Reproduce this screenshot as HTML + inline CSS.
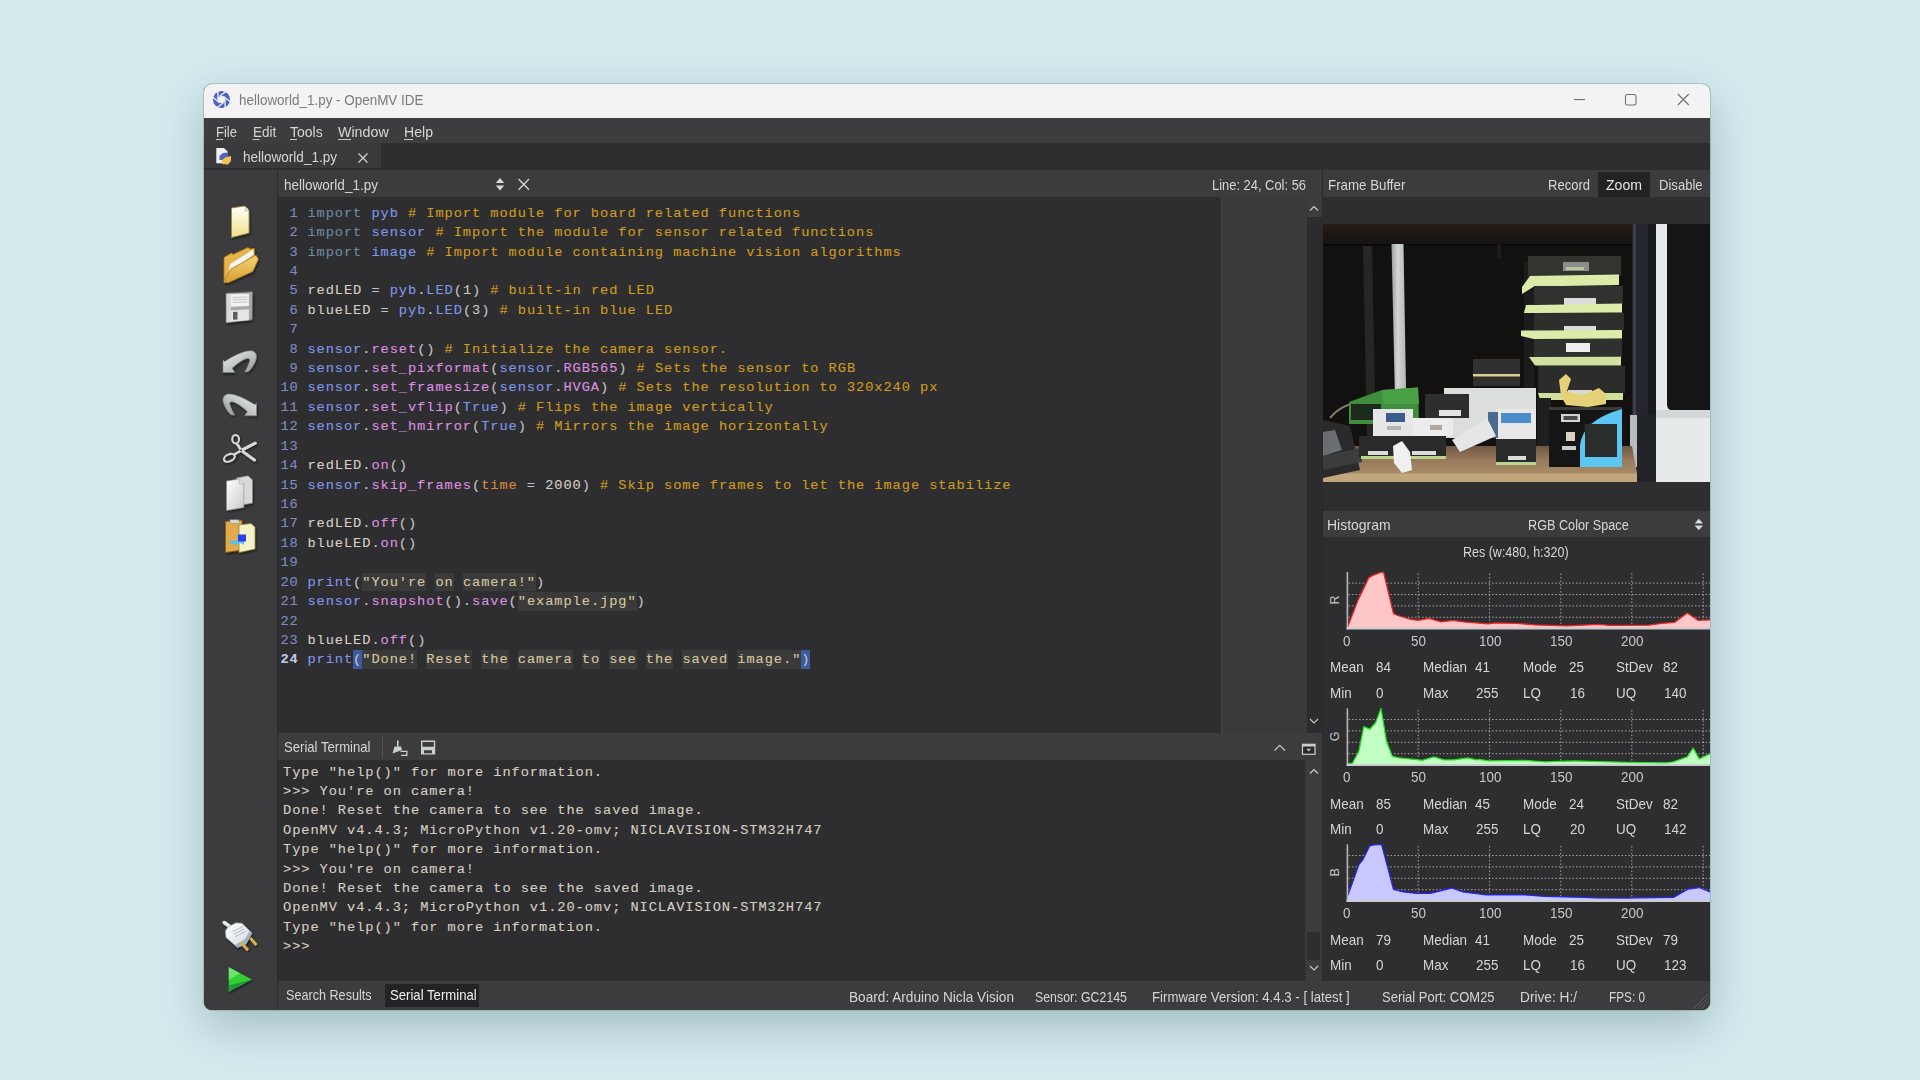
<!DOCTYPE html><html><head><meta charset="utf-8"><style>
*{margin:0;padding:0;box-sizing:border-box}
html,body{width:1920px;height:1080px;overflow:hidden}
body{background:#d4ebee;font-family:"Liberation Sans",sans-serif;position:relative}
.a{position:absolute}
.u{position:absolute;font-family:"Liberation Sans",sans-serif;white-space:pre;line-height:20px;height:20px}
.c{position:absolute;left:0;font-family:"Liberation Mono",monospace;white-space:pre;-webkit-text-stroke:0.1px currentColor}
.kw{color:#6a8ca2}.id{color:#8097ec}.cm{color:#cf9c1c}.fn{color:#dd8ee0}.tx{color:#d6cfc2}.pu{color:#c4c4c4}.or{color:#d98a3c}.st{color:#d8c8a0}
.sb{background:#3a3a3b;padding:2px 0 1.5px}
.ln{color:#7d8dc4}
.ph{background:#3d5aa0;padding:2px 0 1.5px}
</style></head><body>
<div class="a" style="left:204px;top:84px;width:1506px;height:926px;border-radius:8px;background:#3c3c3e;box-shadow:0 0 0 1px rgba(80,110,115,.26),0 16px 46px rgba(30,70,80,.28)"></div>
<div class="a" style="left:204px;top:84px;width:1506px;height:926px;border-radius:8px;overflow:hidden">
<div class="a" style="left:0px;top:0px;width:1506px;height:34px;background:#f3f3f3;"></div>
<div class="a" style="left:0px;top:34px;width:1506px;height:25px;background:#3d3d3f;"></div>
<div class="a" style="left:0px;top:59px;width:1506px;height:27px;background:#2e2e30;"></div>
<div class="a" style="left:0px;top:59px;width:177px;height:26px;background:#3a3a3c;"></div>
<div class="a" style="left:0px;top:84px;width:177px;height:1px;background:repeating-linear-gradient(90deg,#262628 0 2px,#3a3a3c 2px 3px);"></div>
<div class="a" style="left:0px;top:86px;width:73px;height:840px;background:#3c3c3e;"></div>
<div class="a" style="left:73px;top:86px;width:1px;height:840px;background:#2c2c2e;"></div>
<div class="a" style="left:74px;top:86px;width:1044px;height:27px;background:#3c3c3e;"></div>
<div class="a" style="left:74px;top:113px;width:1044px;height:536px;background:#2e2e30;"></div>
<div class="a" style="left:1017px;top:113px;width:86px;height:536px;background:#3a3a3c;"></div>
<div class="a" style="left:1017px;top:113px;width:1px;height:536px;background:#444446;"></div>
<div class="a" style="left:1103px;top:113px;width:15px;height:536px;background:#2c2c2e;"></div>
<div class="a" style="left:1103px;top:113px;width:15px;height:20px;background:#3c3c3e;"></div>
<div class="a" style="left:1118px;top:86px;width:1px;height:811px;background:#2a2a2c;"></div>
<div class="a" style="left:1119px;top:86px;width:387px;height:27px;background:#3c3c3e;"></div>
<div class="a" style="left:1119px;top:113px;width:387px;height:314px;background:#2e2e30;"></div>
<div class="a" style="left:1119px;top:426px;width:387px;height:27px;background:#3c3c3e;"></div>
<div class="a" style="left:1119px;top:426px;width:387px;height:1px;background:repeating-linear-gradient(90deg,#2a2a2c 0 2px,#3c3c3e 2px 3px);"></div>
<div class="a" style="left:1119px;top:453px;width:387px;height:444px;background:#2e2e30;"></div>
<div class="a" style="left:74px;top:649px;width:1044px;height:27px;background:#3c3c3e;"></div>
<div class="a" style="left:74px;top:676px;width:1044px;height:221px;background:#2e2e30;"></div>
<div class="a" style="left:1101px;top:676px;width:17px;height:221px;background:#3c3c3e;"></div>
<div class="a" style="left:1103px;top:848px;width:13px;height:28px;background:#2e2e30;"></div>
<div class="a" style="left:1101px;top:676px;width:1px;height:221px;background:repeating-linear-gradient(#2e2e30 0 2px,#4a4a4c 2px 3px);"></div>
<div class="a" style="left:74px;top:897px;width:1432px;height:29px;background:#3c3c3e;"></div>
<div class="a" style="left:1394px;top:88px;width:52px;height:25px;background:#232325;"></div>
<div class="a" style="left:178px;top:653px;width:1px;height:20px;background:#555557;"></div>
<div class="a" style="left:181px;top:900px;width:94px;height:23px;background:#232325;"></div>
<svg class="a" style="left:1119px;top:453px" width="387" height="444" viewBox="1323 537 387 444"><line x1="1348.5" y1="583.1" x2="1710" y2="583.1" stroke="#c4c4c4" stroke-width="1" stroke-dasharray="1.6 1.9" opacity="0.75"/><line x1="1348.5" y1="594.5" x2="1710" y2="594.5" stroke="#c4c4c4" stroke-width="1" stroke-dasharray="1.6 1.9" opacity="0.75"/><line x1="1348.5" y1="605.9" x2="1710" y2="605.9" stroke="#c4c4c4" stroke-width="1" stroke-dasharray="1.6 1.9" opacity="0.75"/><line x1="1348.5" y1="617.3" x2="1710" y2="617.3" stroke="#c4c4c4" stroke-width="1" stroke-dasharray="1.6 1.9" opacity="0.75"/><line x1="1418.2" y1="573.5" x2="1418.2" y2="628.4" stroke="#c4c4c4" stroke-width="1" stroke-dasharray="1.6 1.9" opacity="0.75"/><line x1="1489.6" y1="573.5" x2="1489.6" y2="628.4" stroke="#c4c4c4" stroke-width="1" stroke-dasharray="1.6 1.9" opacity="0.75"/><line x1="1560.8" y1="573.5" x2="1560.8" y2="628.4" stroke="#c4c4c4" stroke-width="1" stroke-dasharray="1.6 1.9" opacity="0.75"/><line x1="1631.8" y1="573.5" x2="1631.8" y2="628.4" stroke="#c4c4c4" stroke-width="1" stroke-dasharray="1.6 1.9" opacity="0.75"/><line x1="1703.2" y1="573.5" x2="1703.2" y2="628.4" stroke="#c4c4c4" stroke-width="1" stroke-dasharray="1.6 1.9" opacity="0.75"/><polygon points="1347.9,628.4 1347.9,626.4 1357.8,600.6 1368.7,577.9 1371.7,575.9 1380.6,572.4 1383.6,572.4 1393.5,613.5 1397.4,615.5 1409.3,619 1418.2,620.4 1429.1,618.4 1441,621.9 1452.9,620.4 1463.8,621.9 1488.5,623.9 1494.5,622.9 1516.2,623.4 1534.9,624.9 1566.6,625.9 1599.2,624.4 1610.1,625.4 1648.7,625.2 1661.6,623.4 1674.4,622.4 1687.3,613 1698.2,620.4 1710,619.9 1710,628.4" fill="#ffc6c8"/><polyline points="1347.9,626.4 1357.8,600.6 1368.7,577.9 1371.7,575.9 1380.6,572.4 1383.6,572.4 1393.5,613.5 1397.4,615.5 1409.3,619 1418.2,620.4 1429.1,618.4 1441,621.9 1452.9,620.4 1463.8,621.9 1488.5,623.9 1494.5,622.9 1516.2,623.4 1534.9,624.9 1566.6,625.9 1599.2,624.4 1610.1,625.4 1648.7,625.2 1661.6,623.4 1674.4,622.4 1687.3,613 1698.2,620.4 1710,619.9" fill="none" stroke="#e82424" stroke-width="1.3" stroke-linejoin="round"/><line x1="1347.4" y1="571.9" x2="1347.4" y2="629.4" stroke="#b4b8b8" stroke-width="1.6"/><line x1="1346.6" y1="628.6" x2="1710" y2="628.6" stroke="#c8cccc" stroke-width="2"/><text x="0" y="0" transform="translate(1339,600) rotate(-90)" text-anchor="middle" font-family="Liberation Sans" font-size="12.5" fill="#c4c4c4">R</text><line x1="1348.5" y1="719.5" x2="1710" y2="719.5" stroke="#c4c4c4" stroke-width="1" stroke-dasharray="1.6 1.9" opacity="0.75"/><line x1="1348.5" y1="730.9" x2="1710" y2="730.9" stroke="#c4c4c4" stroke-width="1" stroke-dasharray="1.6 1.9" opacity="0.75"/><line x1="1348.5" y1="742.3" x2="1710" y2="742.3" stroke="#c4c4c4" stroke-width="1" stroke-dasharray="1.6 1.9" opacity="0.75"/><line x1="1348.5" y1="753.6999999999999" x2="1710" y2="753.6999999999999" stroke="#c4c4c4" stroke-width="1" stroke-dasharray="1.6 1.9" opacity="0.75"/><line x1="1418.2" y1="709.9" x2="1418.2" y2="764.8" stroke="#c4c4c4" stroke-width="1" stroke-dasharray="1.6 1.9" opacity="0.75"/><line x1="1489.6" y1="709.9" x2="1489.6" y2="764.8" stroke="#c4c4c4" stroke-width="1" stroke-dasharray="1.6 1.9" opacity="0.75"/><line x1="1560.8" y1="709.9" x2="1560.8" y2="764.8" stroke="#c4c4c4" stroke-width="1" stroke-dasharray="1.6 1.9" opacity="0.75"/><line x1="1631.8" y1="709.9" x2="1631.8" y2="764.8" stroke="#c4c4c4" stroke-width="1" stroke-dasharray="1.6 1.9" opacity="0.75"/><line x1="1703.2" y1="709.9" x2="1703.2" y2="764.8" stroke="#c4c4c4" stroke-width="1" stroke-dasharray="1.6 1.9" opacity="0.75"/><polygon points="1347.9,764.8 1347.9,763.3 1352.4,763.3 1358.8,751.5 1363.8,726.7 1369.7,729.2 1375.6,722.8 1381,708.4 1386.5,741.6 1392.4,756.4 1399.4,757.9 1419.2,759.9 1422.1,760.4 1434,756.9 1443.9,759.9 1453.8,759.9 1467.7,757.9 1476.6,759.9 1479.5,759.4 1488.4,760.9 1525,760.4 1544.8,761.9 1574.5,760.9 1589.3,761.4 1629,762.3 1665.5,762.8 1673.4,761.9 1687.3,756.9 1693.2,748 1699.2,758.9 1710,753.9 1710,764.8" fill="#c2ffc2"/><polyline points="1347.9,763.3 1352.4,763.3 1358.8,751.5 1363.8,726.7 1369.7,729.2 1375.6,722.8 1381,708.4 1386.5,741.6 1392.4,756.4 1399.4,757.9 1419.2,759.9 1422.1,760.4 1434,756.9 1443.9,759.9 1453.8,759.9 1467.7,757.9 1476.6,759.9 1479.5,759.4 1488.4,760.9 1525,760.4 1544.8,761.9 1574.5,760.9 1589.3,761.4 1629,762.3 1665.5,762.8 1673.4,761.9 1687.3,756.9 1693.2,748 1699.2,758.9 1710,753.9" fill="none" stroke="#22e022" stroke-width="1.3" stroke-linejoin="round"/><line x1="1347.4" y1="708.3" x2="1347.4" y2="765.8" stroke="#b4b8b8" stroke-width="1.6"/><line x1="1346.6" y1="765.0" x2="1710" y2="765.0" stroke="#c8cccc" stroke-width="2"/><text x="0" y="0" transform="translate(1339,736.4) rotate(-90)" text-anchor="middle" font-family="Liberation Sans" font-size="12.5" fill="#c4c4c4">G</text><line x1="1348.5" y1="855.5" x2="1710" y2="855.5" stroke="#c4c4c4" stroke-width="1" stroke-dasharray="1.6 1.9" opacity="0.75"/><line x1="1348.5" y1="866.9" x2="1710" y2="866.9" stroke="#c4c4c4" stroke-width="1" stroke-dasharray="1.6 1.9" opacity="0.75"/><line x1="1348.5" y1="878.3" x2="1710" y2="878.3" stroke="#c4c4c4" stroke-width="1" stroke-dasharray="1.6 1.9" opacity="0.75"/><line x1="1348.5" y1="889.6999999999999" x2="1710" y2="889.6999999999999" stroke="#c4c4c4" stroke-width="1" stroke-dasharray="1.6 1.9" opacity="0.75"/><line x1="1418.2" y1="845.9" x2="1418.2" y2="900.8" stroke="#c4c4c4" stroke-width="1" stroke-dasharray="1.6 1.9" opacity="0.75"/><line x1="1489.6" y1="845.9" x2="1489.6" y2="900.8" stroke="#c4c4c4" stroke-width="1" stroke-dasharray="1.6 1.9" opacity="0.75"/><line x1="1560.8" y1="845.9" x2="1560.8" y2="900.8" stroke="#c4c4c4" stroke-width="1" stroke-dasharray="1.6 1.9" opacity="0.75"/><line x1="1631.8" y1="845.9" x2="1631.8" y2="900.8" stroke="#c4c4c4" stroke-width="1" stroke-dasharray="1.6 1.9" opacity="0.75"/><line x1="1703.2" y1="845.9" x2="1703.2" y2="900.8" stroke="#c4c4c4" stroke-width="1" stroke-dasharray="1.6 1.9" opacity="0.75"/><polygon points="1347.9,900.8 1347.9,895.4 1358.8,864.7 1362.8,859.8 1369.7,845.9 1373.6,844.9 1381.6,844.4 1393.5,889.4 1403.3,891.9 1417.2,893.4 1430.1,893.4 1451.8,888 1462.7,891.9 1486.5,894.9 1525,894.9 1544.8,896.4 1584.4,897.4 1594.3,897.9 1624,898.1 1673.4,897.4 1688.3,889 1699.2,887.5 1710,891.9 1710,900.8" fill="#c8c8ff"/><polyline points="1347.9,895.4 1358.8,864.7 1362.8,859.8 1369.7,845.9 1373.6,844.9 1381.6,844.4 1393.5,889.4 1403.3,891.9 1417.2,893.4 1430.1,893.4 1451.8,888 1462.7,891.9 1486.5,894.9 1525,894.9 1544.8,896.4 1584.4,897.4 1594.3,897.9 1624,898.1 1673.4,897.4 1688.3,889 1699.2,887.5 1710,891.9" fill="none" stroke="#2424ee" stroke-width="1.3" stroke-linejoin="round"/><line x1="1347.4" y1="844.3" x2="1347.4" y2="901.8" stroke="#b4b8b8" stroke-width="1.6"/><line x1="1346.6" y1="901.0" x2="1710" y2="901.0" stroke="#c8cccc" stroke-width="2"/><text x="0" y="0" transform="translate(1339,872.4) rotate(-90)" text-anchor="middle" font-family="Liberation Sans" font-size="12.5" fill="#c4c4c4">B</text></svg>

<svg class="a" style="left:1119px;top:140px" width="387" height="258" viewBox="1323 224 387 258">
<defs>
<linearGradient id="pole" x1="0" x2="1"><stop offset="0" stop-color="#9a9c9a"/><stop offset=".4" stop-color="#d4d6d4"/><stop offset="1" stop-color="#b0b2b0"/></linearGradient>
<linearGradient id="shelf" x1="0" y1="0" x2="0" y2="1"><stop offset="0" stop-color="#6e5844"/><stop offset=".5" stop-color="#98795a"/><stop offset="1" stop-color="#a88a66"/></linearGradient>
<linearGradient id="topb" x1="0" y1="0" x2="0" y2="1"><stop offset="0" stop-color="#241c17"/><stop offset="1" stop-color="#161311"/></linearGradient>
</defs>
<rect x="1323" y="224" width="387" height="258" fill="#121110"/>
<rect x="1323" y="224" width="310" height="20" fill="url(#topb)"/>
<rect x="1323" y="244" width="310" height="2" fill="#0a0a09"/>
<polygon points="1363,246 1372,246 1376,440 1367,440" fill="#262624"/>
<polygon points="1391.5,244 1403.5,244 1407,445 1396,445" fill="url(#pole)"/>
<rect x="1497" y="244" width="4" height="14" fill="#1c1c1c"/>
<!-- right side -->
<rect x="1632" y="224" width="24" height="258" fill="#24262c"/>
<rect x="1633" y="224" width="3" height="258" fill="#3a3e4a"/>
<rect x="1648" y="224" width="8" height="258" fill="#1a1b20"/>
<rect x="1656" y="224" width="54" height="258" fill="#e6eaea"/>
<path d="M1670,224 H1710 V410.5 H1673 Q1667,410.5 1667,404 V224 Z" fill="#151515"/>
<rect x="1656" y="410" width="54" height="8" fill="#d4d8d8"/>
<rect x="1630" y="415" width="7" height="52" fill="#b8bcbc"/>
<!-- shelf -->
<polygon points="1323,446 1632,446 1637,473 1323,473" fill="url(#shelf)"/>
<rect x="1323" y="473" width="316" height="9" fill="#c2a67e"/>
<rect x="1323" y="472" width="316" height="1.5" fill="#a88c66"/>
<rect x="1637" y="415" width="19" height="67" fill="#222328"/>
<!-- stack -->
<g>
<rect x="1524" y="262" width="10" height="140" fill="#1c1c1c"/>
<rect x="1528" y="256" width="93" height="20" fill="#34342f"/>
<rect x="1563" y="262" width="26" height="9" fill="#8c8c88"/>
<rect x="1566" y="267" width="18" height="3" fill="#b8c8a0"/>
<polygon points="1530,276 1619,274.5 1619,285 1534,286.5 1522,294 1522,287" fill="#dcebaa"/>
<rect x="1534" y="286" width="89" height="18" fill="#313130"/>
<rect x="1564" y="298" width="32" height="7" fill="#dcdcdc"/>
<polygon points="1526,305 1622,303.5 1622,312.5 1534,313 1524,313" fill="#dcebaa"/>
<rect x="1534" y="313" width="90" height="17" fill="#2e2e2d"/>
<rect x="1564" y="326" width="32" height="7" fill="#dcdcdc"/>
<polygon points="1521,330.5 1622,330 1622,338.5 1534,339 1521,336" fill="#dcebaa"/>
<rect x="1534" y="339" width="88" height="18" fill="#30302f"/>
<rect x="1566" y="343" width="24" height="9" fill="#eeeeee"/>
<polygon points="1529,357 1621,356.8 1621,365.5 1535,365.5" fill="#d2e0a0"/>
<rect x="1538" y="366" width="87" height="27" fill="#2c2c2b"/>
<rect x="1568" y="390" width="24" height="5" fill="#d8d8d8"/>
<polygon points="1538,393 1623,393 1623,400 1540,400" fill="#cfe09c"/>
</g>
<!-- cable -->
<path d="M1559,380 L1566,374 L1571,379 L1567,391 L1581,396 L1599,388 L1606,394 L1606,404 L1588,407 L1566,405 L1561,396 Z" fill="#e6d078"/>
<!-- black front box -->
<rect x="1537" y="398" width="14" height="48" fill="#1f1f1f"/>
<rect x="1549" y="407" width="73" height="60" fill="#151515"/>
<rect x="1549" y="407" width="73" height="3" fill="#3a3a3a"/>
<path d="M1580,467 V446 Q1582,420 1622,409 V467 Z" fill="#5cc6f2"/>
<rect x="1585" y="424" width="32" height="33" fill="#2c2e2e"/>
<rect x="1561" y="414" width="19" height="8" fill="#d4d4d4"/>
<rect x="1563.5" y="416" width="14" height="4" fill="#4a4a4a"/>
<rect x="1566" y="432" width="9" height="9" fill="#d8d0c0"/>
<rect x="1562" y="446" width="14" height="4" fill="#c8c8c8"/>
<!-- left side objects -->
<polygon points="1323,420 1350,426 1360,470 1323,478" fill="#2a2a2a"/>
<polygon points="1323,432 1335,430 1342,450 1323,456" fill="#6a6e70"/>
<polygon points="1323,456 1360,448 1362,462 1323,470" fill="#3c3c3c"/>
<path d="M1330,418 Q1345,400 1372,402" stroke="#8a7a60" stroke-width="2" fill="none"/>
<!-- green box -->
<polygon points="1349,402 1382,390 1418,387.5 1419,424 1349,424" fill="#3e8e3c"/>
<polygon points="1382,390 1418,387.5 1419,404 1383,404" fill="#4aa046"/>
<rect x="1351" y="404" width="30" height="16" fill="#1c2a1e"/>
<!-- boxes middle -->
<rect x="1444" y="388" width="92" height="50" fill="#dcdedc"/>
<rect x="1473" y="359" width="47" height="27" fill="#303030"/>
<rect x="1473" y="374" width="47" height="2.5" fill="#d8cf8a"/>
<rect x="1425" y="394" width="44" height="24" fill="#2e2e2e"/>
<rect x="1439" y="410" width="22" height="6" fill="#e4e4e4"/>
<rect x="1373" y="409" width="40" height="27" fill="#e6e6e6"/>
<rect x="1386" y="413" width="19" height="9" fill="#3a5c8e"/>
<rect x="1413" y="418" width="40" height="18" fill="#ececec"/>
<rect x="1430" y="425" width="12" height="5" fill="#b0a8a0"/>
<rect x="1387" y="426" width="14" height="4" fill="#b4b4b4"/>
<rect x="1496" y="409" width="40" height="30" fill="#e8e8e8"/>
<rect x="1501" y="413" width="30" height="10" fill="#4c8cc8"/>
<rect x="1488" y="412" width="10" height="26" fill="#4a6a90"/>
<polygon points="1452,440 1487,418 1496,436 1460,452" fill="#e6e6e6"/>
<rect x="1359" y="436" width="87" height="21" fill="#2a2a2a"/>
<rect x="1361" y="456" width="85" height="3" fill="#b6d68e"/>
<rect x="1368" y="451" width="20" height="4" fill="#dcdcdc"/>
<rect x="1412" y="451" width="24" height="4" fill="#dcdcdc"/>
<rect x="1496" y="439" width="40" height="23" fill="#2c2c2c"/>
<rect x="1496" y="462" width="40" height="3" fill="#b6d68e"/>
<rect x="1508" y="456" width="18" height="4" fill="#dcdcdc"/>
<polygon points="1393,446 1402,441 1410,452 1412,470 1402,473 1394,463" fill="#f0f0f0"/>
</svg>


<svg class="a" style="left:0;top:0" width="1506" height="926" viewBox="204 84 1506 926">
<defs>
<linearGradient id="pg" x1="0" y1="0" x2="0" y2="1"><stop offset="0" stop-color="#fffff6"/><stop offset="1" stop-color="#efe08a"/></linearGradient>
<linearGradient id="fold" x1="0" y1="0" x2="0" y2="1"><stop offset="0" stop-color="#f2d27a"/><stop offset="1" stop-color="#d99e32"/></linearGradient>
<linearGradient id="silver" x1="0" y1="0" x2="1" y2="1"><stop offset="0" stop-color="#f2f4f4"/><stop offset=".6" stop-color="#b8bcbc"/><stop offset="1" stop-color="#8e9292"/></linearGradient>
<linearGradient id="wpage" x1="0" y1="0" x2="1" y2="1"><stop offset="0" stop-color="#ffffff"/><stop offset="1" stop-color="#c8cacc"/></linearGradient>
<linearGradient id="flop" x1="0" y1="0" x2="1" y2="1"><stop offset="0" stop-color="#f4f4f4"/><stop offset="1" stop-color="#9c9ea0"/></linearGradient>
<linearGradient id="grn" x1="0" y1="0" x2="0" y2="1"><stop offset="0" stop-color="#5ee85e"/><stop offset=".6" stop-color="#2cc82c"/><stop offset="1" stop-color="#1c8a28"/></linearGradient>
<filter id="sh" x="-30%" y="-30%" width="160%" height="160%"><feDropShadow dx="1" dy="1.5" stdDeviation="0.9" flood-color="#000" flood-opacity="0.55"/></filter>
</defs>
<!-- title icon -->
<g transform="translate(221.5,99.5)">
<circle r="8.6" fill="#4d62c4"/>
<circle r="3.6" fill="#f3f3f3"/>
<g stroke="#f3f3f3" stroke-width="1.3">
<line x1="-1.8" y1="-3.2" x2="5.5" y2="-9"/><line x1="1.8" y1="-3.2" x2="9" y2="2.5"/><line x1="3.6" y1="0" x2="3.5" y2="9"/>
<line x1="1.8" y1="3.2" x2="-5.5" y2="9"/><line x1="-1.8" y1="3.2" x2="-9" y2="-2.5"/><line x1="-3.6" y1="0" x2="-3.5" y2="-9"/>
</g>
</g>
<!-- window buttons -->
<rect x="1574" y="99" width="11" height="1.1" fill="#707070"/>
<rect x="1625.5" y="94.5" width="10.5" height="10.5" rx="1.8" fill="none" stroke="#707070" stroke-width="1.1"/>
<path d="M1677.8,94 L1688.8,105 M1688.8,94 L1677.8,105" stroke="#707070" stroke-width="1.1"/>
<!-- menu underlines -->
<g fill="#c8c8c8">
<rect x="216" y="139" width="7" height="1"/><rect x="252.6" y="139" width="7" height="1"/><rect x="290" y="139" width="7" height="1"/><rect x="338" y="139" width="13" height="1"/><rect x="404" y="139" width="9" height="1"/>
</g>
<!-- tab python icon -->
<path d="M216.3,148 L224,148 L228,152 L228,163.3 L216.3,163.3 Z" fill="#f0f0f0"/>
<path d="M219.5,160 L219.5,156 L223,153 L228,152.5 L228,157 L224,160 Z" fill="#4a64c0"/>
<path d="M222,164 L222,160 L225,157.5 L231,156 L231,161 L228,164.5 Z" fill="#eec455"/>
<path d="M358.5,153.5 L367.5,162.5 M367.5,153.5 L358.5,162.5" stroke="#d4d4d4" stroke-width="1.2"/>
<!-- editor header icons -->
<polygon points="495.8,183 500,178 504.2,183" fill="#d2dcdc"/>
<polygon points="495.8,185.6 500,190.5 504.2,185.6" fill="#d2dcdc"/>
<path d="M518.5,179 L529,189.8 M529,179 L518.5,189.8" stroke="#d0d8d8" stroke-width="1.3"/>
<!-- scroll chevrons -->
<g fill="none" stroke="#c8cccc" stroke-width="1.1">
<path d="M1310,210.5 L1314,206.5 L1318,210.5"/>
<path d="M1310,719 L1314,723 L1318,719"/>
<path d="M1310,773.5 L1314,769.5 L1318,773.5"/>
<path d="M1310,966 L1314,970 L1318,966"/>
<path d="M1274.5,750.5 L1279.7,745.3 L1284.9,750.5"/>
</g>
<rect x="1302.5" y="744.3" width="12.5" height="10" fill="#2a2a2a" stroke="#c8d0d0" stroke-width="1.2"/>
<rect x="1302.5" y="744.3" width="12.5" height="2.2" fill="#c8d0d0"/>
<polygon points="1306.3,748.8 1308.7,751.5 1311.2,748.8" fill="#c0c0c0"/>
<!-- histogram header arrows -->
<polygon points="1694.6,523.4 1698.8,518.8 1703,523.4" fill="#d2dcdc"/>
<polygon points="1694.6,525.6 1698.8,530.2 1703,525.6" fill="#d2dcdc"/>
<!-- serial terminal header icons: broom + save -->
<g fill="#c8d0d0">
<rect x="397" y="740.5" width="1.6" height="6"/>
<polygon points="394.5,746.5 401,746.5 402,750 392.5,753.5"/>
<path d="M400.5,750.8 h7 v5.2 h-6.5 v-1.2 h5.3 v-2.8 h-5.8 z"/>
<path d="M421,740.5 h14.2 v14 h-14.2 z M422.4,742 v4.8 h11.4 v-4.8 z M424,750.3 v3 h8 v-3 z" fill-rule="evenodd"/>
</g>
<!-- toolbar icons -->
<g filter="url(#sh)">
<!-- new -->
<path d="M231.5,208 L245,206 L249,210.5 L249,233 L231.5,237.5 Z" fill="url(#pg)" stroke="#9c8a3c" stroke-width=".8"/>
<path d="M245,206 L245.5,211 L249,210.5" fill="#e8e8e8" stroke="#9c9c9c" stroke-width=".6"/>
<!-- open folder -->
<path d="M224,257.5 L231.5,253 L233,254.5 L248,247.5 L250,249 L254.5,248.5 L254.5,262 L227,282 L224,283 Z" fill="#e6b44a" stroke="#a8781c" stroke-width=".8"/>
<path d="M229.8,264.2 L253.1,249.5 L253.5,254.5 L228.6,272.8 Z" fill="#f4f4f6"/>
<path d="M231,269 L256,255.2 L258.4,259.3 L252.7,271.6 L227.4,283 L224.5,279.7 Z" fill="url(#fold)" stroke="#a8781c" stroke-width=".8"/>
<!-- save floppy -->
<path d="M225.9,293.3 L252.6,291.7 L252.2,319.8 L226.1,322.7 Z" fill="#a6a8aa" stroke="#6a6c6e" stroke-width=".7"/>
<path d="M226.5,294 L231,293.6 L231,322 L226.5,322.5 Z" fill="#d8dada"/>
<path d="M231,294.1 L248.9,293.7 L248.9,306 L231,306.8 Z" fill="#f2f2f2"/>
<path d="M232.5,297.5 L247.5,297 M232.5,300 L247.5,299.5 M232.5,302.5 L247.5,302" stroke="#b4bcc0" stroke-width=".8"/>
<path d="M231,310.4 L248.9,309.2 L248.9,320.2 L231,321.8 Z" fill="#e4e6e6"/>
<path d="M233,312 L237.5,311.8 L237.5,319.4 L233,319.8 Z" fill="#5c5e60"/>
<!-- undo -->
<path d="M223,360 L223,372.5 L234.8,372.5 L232.1,368.2 C236,365 242,359.5 247.4,358.5 C249.5,358.2 250.2,359.8 249.5,361.5 C248.5,365 246.5,369 244.6,371.9 L248.6,371.6 C252,368.5 255.5,363 256.5,357.8 C257,353 253.5,350.5 250.1,350.8 C244,351 236,354.5 224.6,361.5 Z" fill="url(#silver)" stroke="#7e8282" stroke-width=".6"/>
<!-- redo -->
<g transform="translate(479.5,43.2) scale(-1,1)">
<path d="M223,360 L223,372.5 L234.8,372.5 L232.1,368.2 C236,365 242,359.5 247.4,358.5 C249.5,358.2 250.2,359.8 249.5,361.5 C248.5,365 246.5,369 244.6,371.9 L248.6,371.6 C252,368.5 255.5,363 256.5,357.8 C257,353 253.5,350.5 250.1,350.8 C244,351 236,354.5 224.6,361.5 Z" fill="url(#silver)" stroke="#7e8282" stroke-width=".6"/>
</g>
<!-- scissors -->
<g fill="none" stroke="#d6dada" stroke-linecap="round">
<path d="M241.2,450.4 L255.3,443.2" stroke-width="3"/>
<path d="M241.2,450.4 L254.4,460" stroke-width="3"/>
<path d="M237.5,444.5 L241.2,450.4" stroke-width="2.6"/>
<ellipse cx="235.6" cy="439.2" rx="3.4" ry="4.2" stroke-width="2"/>
<path d="M240.5,451 L234,454.5" stroke-width="2.4"/>
<ellipse cx="229.4" cy="457.8" rx="5.8" ry="3.4" transform="rotate(-25 229.4 457.8)" stroke-width="2"/>
</g>
<circle cx="241.2" cy="450.4" r="0.9" fill="#333"/>
<!-- copy -->
<path d="M236.5,478 L248,475.8 L252.5,480 L252.5,503 L236.5,506 Z" fill="#d6d8da" stroke="#8a8c8e" stroke-width=".6"/>
<path d="M226.5,481 L239,479 L243.8,483.5 L243.8,507.5 L226.5,510.5 Z" fill="url(#wpage)" stroke="#8a8c8e" stroke-width=".6"/>
<path d="M239,479 L239.5,484 L243.8,483.5" fill="#e0e0e0" stroke="#9a9a9a" stroke-width=".5"/>
<!-- paste -->
<path d="M225.5,521.5 L242,520.5 L242,550 L225.5,552.5 Z" fill="#e2aa4e" stroke="#8e5e10" stroke-width=".8"/>
<rect x="230" y="519.8" width="9" height="3.5" fill="#d8d8d8" stroke="#888" stroke-width=".5"/>
<path d="M239,525 L251,523.5 L255,527 L255,549 L239,552.5 Z" fill="#f6f2c8" stroke="#8e7e30" stroke-width=".7"/>
<path d="M228,541 Q233,547 241,543 L244,545 L244,537 L236,537 L238.5,539.5 Q233,542 228,541 Z" fill="#5ac0f0"/>
<rect x="238" y="534.5" width="8" height="7" fill="#2a40e8"/>
<!-- plug -->
<defs><linearGradient id="plugb" x1="0" y1="0" x2="1" y2="1"><stop offset="0" stop-color="#ffffff"/><stop offset=".7" stop-color="#dfe4e8"/><stop offset="1" stop-color="#b8c2cc"/></linearGradient></defs>
<path d="M224.2,922.6 L230.5,927" stroke="#e6e8e8" stroke-width="3.6" stroke-linecap="round"/>
<path d="M228,927 L236,922.8 L242,923.2 L252,933 L246,944 L237.5,947.5 L226,937.5 L225.3,931 Z" fill="url(#plugb)" stroke="#8c949a" stroke-width=".6"/>
<path d="M252,933 L246,944 L237.5,947.5 L235.5,944.5 L244.5,939.5 L249.8,931 Z" fill="#a4b2c0"/>
<path d="M232.5,931.5 L243,926.5 M233.8,934 L244.3,929 M235.1,936.5 L245.6,931.5" stroke="#aab6c0" stroke-width=".9"/>
<path d="M241,942.5 L248,950.3 M250.3,938 L256.4,945" stroke="#d9b24c" stroke-width="2.8"/>
<!-- play -->
<polygon points="228.8,967.2 251.8,979.5 228.8,991.8" fill="#30d030"/>
<polygon points="228.8,967.2 240,973.2 228.8,980" fill="#6ee66e"/>
<polygon points="228.8,985.5 251.8,979.5 228.8,991.8" fill="#24983a"/>
</g>
<!-- string bg dotted under? resize grip -->
<g stroke="#58585a" stroke-width="1">
<path d="M1693,1009 L1709,993 M1697,1009 L1709,997 M1701,1009 L1709,1001"/>
</g>
</svg>

<div class="u" style="left:34.50px;top:5.64px;font-size:14.30px;color:#7a7a7a;transform-origin:0 0;transform:scaleX(0.9398);">helloworld_1.py - OpenMV IDE</div>
<div class="u" style="left:12.00px;top:38.04px;font-size:14.30px;color:#d6d6d6;transform-origin:0 0;transform:scaleX(0.9113);">File</div>
<div class="u" style="left:48.60px;top:38.04px;font-size:14.30px;color:#d6d6d6;transform-origin:0 0;transform:scaleX(0.9414);">Edit</div>
<div class="u" style="left:86.00px;top:38.04px;font-size:14.30px;color:#d6d6d6;transform-origin:0 0;transform:scaleX(0.9795);">Tools</div>
<div class="u" style="left:134.00px;top:38.04px;font-size:14.30px;color:#d6d6d6;transform-origin:0 0;transform:scaleX(0.9968);">Window</div>
<div class="u" style="left:200.00px;top:38.04px;font-size:14.30px;color:#d6d6d6;transform-origin:0 0;transform:scaleX(0.9860);">Help</div>
<div class="u" style="left:38.70px;top:63.04px;font-size:14.30px;color:#d6d6d6;transform-origin:0 0;transform:scaleX(0.9460);">helloworld_1.py</div>
<div class="u" style="left:79.90px;top:90.64px;font-size:14.30px;color:#d6d6d6;transform-origin:0 0;transform:scaleX(0.9460);">helloworld_1.py</div>
<div class="u" style="left:1008.00px;top:90.64px;font-size:14.30px;color:#d6d6d6;transform-origin:0 0;transform:scaleX(0.9026);">Line: 24, Col: 56</div>
<div class="u" style="left:1123.60px;top:90.64px;font-size:14.30px;color:#d6d6d6;transform-origin:0 0;transform:scaleX(0.9305);">Frame Buffer</div>
<div class="u" style="left:1343.80px;top:90.64px;font-size:14.30px;color:#d6d6d6;transform-origin:0 0;transform:scaleX(0.9111);">Record</div>
<div class="u" style="left:1402.00px;top:90.64px;font-size:14.30px;color:#e6e6e6;transform-origin:0 0;transform:scaleX(0.9848);">Zoom</div>
<div class="u" style="left:1454.60px;top:90.64px;font-size:14.30px;color:#d6d6d6;transform-origin:0 0;transform:scaleX(0.9142);">Disable</div>
<div class="u" style="left:1123.40px;top:430.64px;font-size:14.30px;color:#d6d6d6;transform-origin:0 0;transform:scaleX(0.9760);">Histogram</div>
<div class="u" style="left:1324.30px;top:430.64px;font-size:14.30px;color:#d6d6d6;transform-origin:0 0;transform:scaleX(0.8860);">RGB Color Space</div>
<div class="u" style="left:1259.20px;top:458.14px;font-size:14.30px;color:#d6d6d6;transform-origin:0 0;transform:scaleX(0.8740);">Res (w:480, h:320)</div>
<div class="u" style="left:79.50px;top:653.44px;font-size:14.30px;color:#d6d6d6;transform-origin:0 0;transform:scaleX(0.9172);">Serial Terminal</div>
<div class="u" style="left:82.00px;top:901.14px;font-size:14.30px;color:#d6d6d6;transform-origin:0 0;transform:scaleX(0.8828);">Search Results</div>
<div class="u" style="left:185.70px;top:901.14px;font-size:14.30px;color:#f0f0f0;transform-origin:0 0;transform:scaleX(0.9193);">Serial Terminal</div>
<div class="u" style="left:645.10px;top:902.64px;font-size:14.30px;color:#d6d6d6;transform-origin:0 0;transform:scaleX(0.9536);">Board: Arduino Nicla Vision</div>
<div class="u" style="left:831.00px;top:902.64px;font-size:14.30px;color:#d6d6d6;transform-origin:0 0;transform:scaleX(0.8637);">Sensor: GC2145</div>
<div class="u" style="left:948.20px;top:902.64px;font-size:14.30px;color:#d6d6d6;transform-origin:0 0;transform:scaleX(0.9252);">Firmware Version: 4.4.3 - [ latest ]</div>
<div class="u" style="left:1178.20px;top:902.64px;font-size:14.30px;color:#d6d6d6;transform-origin:0 0;transform:scaleX(0.9083);">Serial Port: COM25</div>
<div class="u" style="left:1316.20px;top:902.64px;font-size:14.30px;color:#d6d6d6;transform-origin:0 0;transform:scaleX(0.9566);">Drive: H:/</div>
<div class="u" style="left:1404.80px;top:902.64px;font-size:14.30px;color:#d6d6d6;transform-origin:0 0;transform:scaleX(0.8236);">FPS: 0</div>
<div class="u" style="left:1125.70px;top:573.24px;font-size:14.30px;color:#d6d6d6;transform-origin:0 0;transform:scaleX(0.9400);">Mean</div>
<div class="u" style="left:1219.40px;top:573.24px;font-size:14.30px;color:#d6d6d6;transform-origin:0 0;transform:scaleX(0.9400);">Median</div>
<div class="u" style="left:1318.50px;top:573.24px;font-size:14.30px;color:#d6d6d6;transform-origin:0 0;transform:scaleX(0.9400);">Mode</div>
<div class="u" style="left:1412.00px;top:573.24px;font-size:14.30px;color:#d6d6d6;transform-origin:0 0;transform:scaleX(0.9400);">StDev</div>
<div class="u" style="left:1172.00px;top:573.24px;font-size:14.30px;color:#d6d6d6;transform-origin:0 0;transform:scaleX(0.9400);">84</div>
<div class="u" style="left:1271.00px;top:573.24px;font-size:14.30px;color:#d6d6d6;transform-origin:0 0;transform:scaleX(0.9400);">41</div>
<div class="u" style="left:1365.00px;top:573.24px;font-size:14.30px;color:#d6d6d6;transform-origin:0 0;transform:scaleX(0.9400);">25</div>
<div class="u" style="left:1459.00px;top:573.24px;font-size:14.30px;color:#d6d6d6;transform-origin:0 0;transform:scaleX(0.9400);">82</div>
<div class="u" style="left:1125.70px;top:598.64px;font-size:14.30px;color:#d6d6d6;transform-origin:0 0;transform:scaleX(0.9400);">Min</div>
<div class="u" style="left:1219.40px;top:598.64px;font-size:14.30px;color:#d6d6d6;transform-origin:0 0;transform:scaleX(0.9400);">Max</div>
<div class="u" style="left:1318.50px;top:598.64px;font-size:14.30px;color:#d6d6d6;transform-origin:0 0;transform:scaleX(0.9400);">LQ</div>
<div class="u" style="left:1412.00px;top:598.64px;font-size:14.30px;color:#d6d6d6;transform-origin:0 0;transform:scaleX(0.9400);">UQ</div>
<div class="u" style="left:1172.00px;top:598.64px;font-size:14.30px;color:#d6d6d6;transform-origin:0 0;transform:scaleX(0.9400);">0</div>
<div class="u" style="left:1271.50px;top:598.64px;font-size:14.30px;color:#d6d6d6;transform-origin:0 0;transform:scaleX(0.9400);">255</div>
<div class="u" style="left:1366.00px;top:598.64px;font-size:14.30px;color:#d6d6d6;transform-origin:0 0;transform:scaleX(0.9400);">16</div>
<div class="u" style="left:1459.50px;top:598.64px;font-size:14.30px;color:#d6d6d6;transform-origin:0 0;transform:scaleX(0.9400);">140</div>
<div class="u" style="left:1125.70px;top:709.64px;font-size:14.30px;color:#d6d6d6;transform-origin:0 0;transform:scaleX(0.9400);">Mean</div>
<div class="u" style="left:1219.40px;top:709.64px;font-size:14.30px;color:#d6d6d6;transform-origin:0 0;transform:scaleX(0.9400);">Median</div>
<div class="u" style="left:1318.50px;top:709.64px;font-size:14.30px;color:#d6d6d6;transform-origin:0 0;transform:scaleX(0.9400);">Mode</div>
<div class="u" style="left:1412.00px;top:709.64px;font-size:14.30px;color:#d6d6d6;transform-origin:0 0;transform:scaleX(0.9400);">StDev</div>
<div class="u" style="left:1172.00px;top:709.64px;font-size:14.30px;color:#d6d6d6;transform-origin:0 0;transform:scaleX(0.9400);">85</div>
<div class="u" style="left:1271.00px;top:709.64px;font-size:14.30px;color:#d6d6d6;transform-origin:0 0;transform:scaleX(0.9400);">45</div>
<div class="u" style="left:1365.00px;top:709.64px;font-size:14.30px;color:#d6d6d6;transform-origin:0 0;transform:scaleX(0.9400);">24</div>
<div class="u" style="left:1459.00px;top:709.64px;font-size:14.30px;color:#d6d6d6;transform-origin:0 0;transform:scaleX(0.9400);">82</div>
<div class="u" style="left:1125.70px;top:734.94px;font-size:14.30px;color:#d6d6d6;transform-origin:0 0;transform:scaleX(0.9400);">Min</div>
<div class="u" style="left:1219.40px;top:734.94px;font-size:14.30px;color:#d6d6d6;transform-origin:0 0;transform:scaleX(0.9400);">Max</div>
<div class="u" style="left:1318.50px;top:734.94px;font-size:14.30px;color:#d6d6d6;transform-origin:0 0;transform:scaleX(0.9400);">LQ</div>
<div class="u" style="left:1412.00px;top:734.94px;font-size:14.30px;color:#d6d6d6;transform-origin:0 0;transform:scaleX(0.9400);">UQ</div>
<div class="u" style="left:1172.00px;top:734.94px;font-size:14.30px;color:#d6d6d6;transform-origin:0 0;transform:scaleX(0.9400);">0</div>
<div class="u" style="left:1271.50px;top:734.94px;font-size:14.30px;color:#d6d6d6;transform-origin:0 0;transform:scaleX(0.9400);">255</div>
<div class="u" style="left:1366.00px;top:734.94px;font-size:14.30px;color:#d6d6d6;transform-origin:0 0;transform:scaleX(0.9400);">20</div>
<div class="u" style="left:1459.50px;top:734.94px;font-size:14.30px;color:#d6d6d6;transform-origin:0 0;transform:scaleX(0.9400);">142</div>
<div class="u" style="left:1125.70px;top:845.64px;font-size:14.30px;color:#d6d6d6;transform-origin:0 0;transform:scaleX(0.9400);">Mean</div>
<div class="u" style="left:1219.40px;top:845.64px;font-size:14.30px;color:#d6d6d6;transform-origin:0 0;transform:scaleX(0.9400);">Median</div>
<div class="u" style="left:1318.50px;top:845.64px;font-size:14.30px;color:#d6d6d6;transform-origin:0 0;transform:scaleX(0.9400);">Mode</div>
<div class="u" style="left:1412.00px;top:845.64px;font-size:14.30px;color:#d6d6d6;transform-origin:0 0;transform:scaleX(0.9400);">StDev</div>
<div class="u" style="left:1172.00px;top:845.64px;font-size:14.30px;color:#d6d6d6;transform-origin:0 0;transform:scaleX(0.9400);">79</div>
<div class="u" style="left:1271.00px;top:845.64px;font-size:14.30px;color:#d6d6d6;transform-origin:0 0;transform:scaleX(0.9400);">41</div>
<div class="u" style="left:1365.00px;top:845.64px;font-size:14.30px;color:#d6d6d6;transform-origin:0 0;transform:scaleX(0.9400);">25</div>
<div class="u" style="left:1459.00px;top:845.64px;font-size:14.30px;color:#d6d6d6;transform-origin:0 0;transform:scaleX(0.9400);">79</div>
<div class="u" style="left:1125.70px;top:870.94px;font-size:14.30px;color:#d6d6d6;transform-origin:0 0;transform:scaleX(0.9400);">Min</div>
<div class="u" style="left:1219.40px;top:870.94px;font-size:14.30px;color:#d6d6d6;transform-origin:0 0;transform:scaleX(0.9400);">Max</div>
<div class="u" style="left:1318.50px;top:870.94px;font-size:14.30px;color:#d6d6d6;transform-origin:0 0;transform:scaleX(0.9400);">LQ</div>
<div class="u" style="left:1412.00px;top:870.94px;font-size:14.30px;color:#d6d6d6;transform-origin:0 0;transform:scaleX(0.9400);">UQ</div>
<div class="u" style="left:1172.00px;top:870.94px;font-size:14.30px;color:#d6d6d6;transform-origin:0 0;transform:scaleX(0.9400);">0</div>
<div class="u" style="left:1271.50px;top:870.94px;font-size:14.30px;color:#d6d6d6;transform-origin:0 0;transform:scaleX(0.9400);">255</div>
<div class="u" style="left:1366.00px;top:870.94px;font-size:14.30px;color:#d6d6d6;transform-origin:0 0;transform:scaleX(0.9400);">16</div>
<div class="u" style="left:1459.50px;top:870.94px;font-size:14.30px;color:#d6d6d6;transform-origin:0 0;transform:scaleX(0.9400);">123</div>
<div class="u" style="left:1139.26px;top:547.24px;font-size:14.30px;color:#c8c8c8;transform-origin:0 0;transform:scaleX(0.9400);">0</div>
<div class="u" style="left:1206.52px;top:547.24px;font-size:14.30px;color:#c8c8c8;transform-origin:0 0;transform:scaleX(0.9400);">50</div>
<div class="u" style="left:1274.79px;top:547.24px;font-size:14.30px;color:#c8c8c8;transform-origin:0 0;transform:scaleX(0.9400);">100</div>
<div class="u" style="left:1345.79px;top:547.24px;font-size:14.30px;color:#c8c8c8;transform-origin:0 0;transform:scaleX(0.9400);">150</div>
<div class="u" style="left:1416.79px;top:547.24px;font-size:14.30px;color:#c8c8c8;transform-origin:0 0;transform:scaleX(0.9400);">200</div>
<div class="u" style="left:1139.26px;top:683.14px;font-size:14.30px;color:#c8c8c8;transform-origin:0 0;transform:scaleX(0.9400);">0</div>
<div class="u" style="left:1206.52px;top:683.14px;font-size:14.30px;color:#c8c8c8;transform-origin:0 0;transform:scaleX(0.9400);">50</div>
<div class="u" style="left:1274.79px;top:683.14px;font-size:14.30px;color:#c8c8c8;transform-origin:0 0;transform:scaleX(0.9400);">100</div>
<div class="u" style="left:1345.79px;top:683.14px;font-size:14.30px;color:#c8c8c8;transform-origin:0 0;transform:scaleX(0.9400);">150</div>
<div class="u" style="left:1416.79px;top:683.14px;font-size:14.30px;color:#c8c8c8;transform-origin:0 0;transform:scaleX(0.9400);">200</div>
<div class="u" style="left:1139.26px;top:819.14px;font-size:14.30px;color:#c8c8c8;transform-origin:0 0;transform:scaleX(0.9400);">0</div>
<div class="u" style="left:1206.52px;top:819.14px;font-size:14.30px;color:#c8c8c8;transform-origin:0 0;transform:scaleX(0.9400);">50</div>
<div class="u" style="left:1274.79px;top:819.14px;font-size:14.30px;color:#c8c8c8;transform-origin:0 0;transform:scaleX(0.9400);">100</div>
<div class="u" style="left:1345.79px;top:819.14px;font-size:14.30px;color:#c8c8c8;transform-origin:0 0;transform:scaleX(0.9400);">150</div>
<div class="u" style="left:1416.79px;top:819.14px;font-size:14.30px;color:#c8c8c8;transform-origin:0 0;transform:scaleX(0.9400);">200</div>
<div class="c ln" style="left:85.55px;top:119.70px;font-size:13.7px;letter-spacing:0.929px;line-height:19.42px;">1</div>
<div class="c" style="left:103.40px;top:119.70px;font-size:13.7px;letter-spacing:0.929px;line-height:19.42px"><span class="kw">import</span><span class="tx"> </span><span class="id">pyb</span><span class="tx"> </span><span class="cm"># Import module for board related functions</span></div>
<div class="c ln" style="left:85.55px;top:139.12px;font-size:13.7px;letter-spacing:0.929px;line-height:19.42px;">2</div>
<div class="c" style="left:103.40px;top:139.12px;font-size:13.7px;letter-spacing:0.929px;line-height:19.42px"><span class="kw">import</span><span class="tx"> </span><span class="id">sensor</span><span class="tx"> </span><span class="cm"># Import the module for sensor related functions</span></div>
<div class="c ln" style="left:85.55px;top:158.54px;font-size:13.7px;letter-spacing:0.929px;line-height:19.42px;">3</div>
<div class="c" style="left:103.40px;top:158.54px;font-size:13.7px;letter-spacing:0.929px;line-height:19.42px"><span class="kw">import</span><span class="tx"> </span><span class="id">image</span><span class="tx"> </span><span class="cm"># Import module containing machine vision algorithms</span></div>
<div class="c ln" style="left:85.55px;top:177.96px;font-size:13.7px;letter-spacing:0.929px;line-height:19.42px;">4</div>
<div class="c" style="left:103.40px;top:177.96px;font-size:13.7px;letter-spacing:0.929px;line-height:19.42px"></div>
<div class="c ln" style="left:85.55px;top:197.38px;font-size:13.7px;letter-spacing:0.929px;line-height:19.42px;">5</div>
<div class="c" style="left:103.40px;top:197.38px;font-size:13.7px;letter-spacing:0.929px;line-height:19.42px"><span class="tx">redLED </span><span class="pu">=</span><span class="tx"> </span><span class="id">pyb</span><span class="pu">.</span><span class="id">LED</span><span class="pu">(1)</span><span class="tx"> </span><span class="cm"># built-in red LED</span></div>
<div class="c ln" style="left:85.55px;top:216.80px;font-size:13.7px;letter-spacing:0.929px;line-height:19.42px;">6</div>
<div class="c" style="left:103.40px;top:216.80px;font-size:13.7px;letter-spacing:0.929px;line-height:19.42px"><span class="tx">blueLED </span><span class="pu">=</span><span class="tx"> </span><span class="id">pyb</span><span class="pu">.</span><span class="id">LED</span><span class="pu">(3)</span><span class="tx"> </span><span class="cm"># built-in blue LED</span></div>
<div class="c ln" style="left:85.55px;top:236.22px;font-size:13.7px;letter-spacing:0.929px;line-height:19.42px;">7</div>
<div class="c" style="left:103.40px;top:236.22px;font-size:13.7px;letter-spacing:0.929px;line-height:19.42px"></div>
<div class="c ln" style="left:85.55px;top:255.64px;font-size:13.7px;letter-spacing:0.929px;line-height:19.42px;">8</div>
<div class="c" style="left:103.40px;top:255.64px;font-size:13.7px;letter-spacing:0.929px;line-height:19.42px"><span class="id">sensor</span><span class="pu">.</span><span class="fn">reset</span><span class="pu">()</span><span class="tx"> </span><span class="cm"># Initialize the camera sensor.</span></div>
<div class="c ln" style="left:85.55px;top:275.06px;font-size:13.7px;letter-spacing:0.929px;line-height:19.42px;">9</div>
<div class="c" style="left:103.40px;top:275.06px;font-size:13.7px;letter-spacing:0.929px;line-height:19.42px"><span class="id">sensor</span><span class="pu">.</span><span class="fn">set_pixformat</span><span class="pu">(</span><span class="id">sensor</span><span class="pu">.</span><span class="fn">RGB565</span><span class="pu">)</span><span class="tx"> </span><span class="cm"># Sets the sensor to RGB</span></div>
<div class="c ln" style="left:76.40px;top:294.48px;font-size:13.7px;letter-spacing:0.929px;line-height:19.42px;">10</div>
<div class="c" style="left:103.40px;top:294.48px;font-size:13.7px;letter-spacing:0.929px;line-height:19.42px"><span class="id">sensor</span><span class="pu">.</span><span class="fn">set_framesize</span><span class="pu">(</span><span class="id">sensor</span><span class="pu">.</span><span class="fn">HVGA</span><span class="pu">)</span><span class="tx"> </span><span class="cm"># Sets the resolution to 320x240 px</span></div>
<div class="c ln" style="left:76.40px;top:313.90px;font-size:13.7px;letter-spacing:0.929px;line-height:19.42px;">11</div>
<div class="c" style="left:103.40px;top:313.90px;font-size:13.7px;letter-spacing:0.929px;line-height:19.42px"><span class="id">sensor</span><span class="pu">.</span><span class="fn">set_vflip</span><span class="pu">(</span><span class="id">True</span><span class="pu">)</span><span class="tx"> </span><span class="cm"># Flips the image vertically</span></div>
<div class="c ln" style="left:76.40px;top:333.32px;font-size:13.7px;letter-spacing:0.929px;line-height:19.42px;">12</div>
<div class="c" style="left:103.40px;top:333.32px;font-size:13.7px;letter-spacing:0.929px;line-height:19.42px"><span class="id">sensor</span><span class="pu">.</span><span class="fn">set_hmirror</span><span class="pu">(</span><span class="id">True</span><span class="pu">)</span><span class="tx"> </span><span class="cm"># Mirrors the image horizontally</span></div>
<div class="c ln" style="left:76.40px;top:352.74px;font-size:13.7px;letter-spacing:0.929px;line-height:19.42px;">13</div>
<div class="c" style="left:103.40px;top:352.74px;font-size:13.7px;letter-spacing:0.929px;line-height:19.42px"></div>
<div class="c ln" style="left:76.40px;top:372.16px;font-size:13.7px;letter-spacing:0.929px;line-height:19.42px;">14</div>
<div class="c" style="left:103.40px;top:372.16px;font-size:13.7px;letter-spacing:0.929px;line-height:19.42px"><span class="tx">redLED</span><span class="pu">.</span><span class="fn">on</span><span class="pu">()</span></div>
<div class="c ln" style="left:76.40px;top:391.58px;font-size:13.7px;letter-spacing:0.929px;line-height:19.42px;">15</div>
<div class="c" style="left:103.40px;top:391.58px;font-size:13.7px;letter-spacing:0.929px;line-height:19.42px"><span class="id">sensor</span><span class="pu">.</span><span class="fn">skip_frames</span><span class="pu">(</span><span class="or">time</span><span class="pu"> = </span><span class="tx">2000</span><span class="pu">)</span><span class="tx"> </span><span class="cm"># Skip some frames to let the image stabilize</span></div>
<div class="c ln" style="left:76.40px;top:411.00px;font-size:13.7px;letter-spacing:0.929px;line-height:19.42px;">16</div>
<div class="c" style="left:103.40px;top:411.00px;font-size:13.7px;letter-spacing:0.929px;line-height:19.42px"></div>
<div class="c ln" style="left:76.40px;top:430.42px;font-size:13.7px;letter-spacing:0.929px;line-height:19.42px;">17</div>
<div class="c" style="left:103.40px;top:430.42px;font-size:13.7px;letter-spacing:0.929px;line-height:19.42px"><span class="tx">redLED</span><span class="pu">.</span><span class="fn">off</span><span class="pu">()</span></div>
<div class="c ln" style="left:76.40px;top:449.84px;font-size:13.7px;letter-spacing:0.929px;line-height:19.42px;">18</div>
<div class="c" style="left:103.40px;top:449.84px;font-size:13.7px;letter-spacing:0.929px;line-height:19.42px"><span class="tx">blueLED</span><span class="pu">.</span><span class="fn">on</span><span class="pu">()</span></div>
<div class="c ln" style="left:76.40px;top:469.26px;font-size:13.7px;letter-spacing:0.929px;line-height:19.42px;">19</div>
<div class="c" style="left:103.40px;top:469.26px;font-size:13.7px;letter-spacing:0.929px;line-height:19.42px"></div>
<div class="c ln" style="left:76.40px;top:488.68px;font-size:13.7px;letter-spacing:0.929px;line-height:19.42px;">20</div>
<div class="c" style="left:103.40px;top:488.68px;font-size:13.7px;letter-spacing:0.929px;line-height:19.42px"><span class="id">print</span><span class="pu">(</span><span class="st sb">&quot;You&#x27;re</span><span class="st"> </span><span class="st sb">on</span><span class="st"> </span><span class="st sb">camera!&quot;</span><span class="pu">)</span></div>
<div class="c ln" style="left:76.40px;top:508.10px;font-size:13.7px;letter-spacing:0.929px;line-height:19.42px;">21</div>
<div class="c" style="left:103.40px;top:508.10px;font-size:13.7px;letter-spacing:0.929px;line-height:19.42px"><span class="id">sensor</span><span class="pu">.</span><span class="fn">snapshot</span><span class="pu">().</span><span class="fn">save</span><span class="pu">(</span><span class="st sb">&quot;example.jpg&quot;</span><span class="pu">)</span></div>
<div class="c ln" style="left:76.40px;top:527.52px;font-size:13.7px;letter-spacing:0.929px;line-height:19.42px;">22</div>
<div class="c" style="left:103.40px;top:527.52px;font-size:13.7px;letter-spacing:0.929px;line-height:19.42px"></div>
<div class="c ln" style="left:76.40px;top:546.94px;font-size:13.7px;letter-spacing:0.929px;line-height:19.42px;">23</div>
<div class="c" style="left:103.40px;top:546.94px;font-size:13.7px;letter-spacing:0.929px;line-height:19.42px"><span class="tx">blueLED</span><span class="pu">.</span><span class="fn">off</span><span class="pu">()</span></div>
<div class="c ln" style="left:76.40px;top:566.36px;font-size:13.7px;letter-spacing:0.929px;line-height:19.42px;color:#c0caee;font-weight:bold">24</div>
<div class="c" style="left:103.40px;top:566.36px;font-size:13.7px;letter-spacing:0.929px;line-height:19.42px"><span class="id">print</span><span class="pu ph">(</span><span class="st sb">&quot;Done!</span><span class="st"> </span><span class="st sb">Reset</span><span class="st"> </span><span class="st sb">the</span><span class="st"> </span><span class="st sb">camera</span><span class="st"> </span><span class="st sb">to</span><span class="st"> </span><span class="st sb">see</span><span class="st"> </span><span class="st sb">the</span><span class="st"> </span><span class="st sb">saved</span><span class="st"> </span><span class="st sb">image.&quot;</span><span class="pu ph">)</span></div>
<div class="c" style="left:79.00px;top:678.54px;font-size:13.7px;letter-spacing:0.929px;line-height:19.42px"><span class="tx">Type &quot;help()&quot; for more information.</span></div>
<div class="c" style="left:79.00px;top:697.96px;font-size:13.7px;letter-spacing:0.929px;line-height:19.42px"><span class="tx">&gt;&gt;&gt; You&#x27;re on camera!</span></div>
<div class="c" style="left:79.00px;top:717.38px;font-size:13.7px;letter-spacing:0.929px;line-height:19.42px"><span class="tx">Done! Reset the camera to see the saved image.</span></div>
<div class="c" style="left:79.00px;top:736.80px;font-size:13.7px;letter-spacing:0.929px;line-height:19.42px"><span class="tx">OpenMV v4.4.3; MicroPython v1.20-omv; NICLAVISION-STM32H747</span></div>
<div class="c" style="left:79.00px;top:756.22px;font-size:13.7px;letter-spacing:0.929px;line-height:19.42px"><span class="tx">Type &quot;help()&quot; for more information.</span></div>
<div class="c" style="left:79.00px;top:775.64px;font-size:13.7px;letter-spacing:0.929px;line-height:19.42px"><span class="tx">&gt;&gt;&gt; You&#x27;re on camera!</span></div>
<div class="c" style="left:79.00px;top:795.06px;font-size:13.7px;letter-spacing:0.929px;line-height:19.42px"><span class="tx">Done! Reset the camera to see the saved image.</span></div>
<div class="c" style="left:79.00px;top:814.48px;font-size:13.7px;letter-spacing:0.929px;line-height:19.42px"><span class="tx">OpenMV v4.4.3; MicroPython v1.20-omv; NICLAVISION-STM32H747</span></div>
<div class="c" style="left:79.00px;top:833.90px;font-size:13.7px;letter-spacing:0.929px;line-height:19.42px"><span class="tx">Type &quot;help()&quot; for more information.</span></div>
<div class="c" style="left:79.00px;top:853.32px;font-size:13.7px;letter-spacing:0.929px;line-height:19.42px"><span class="tx">&gt;&gt;&gt;</span></div>
</div>
</body></html>
